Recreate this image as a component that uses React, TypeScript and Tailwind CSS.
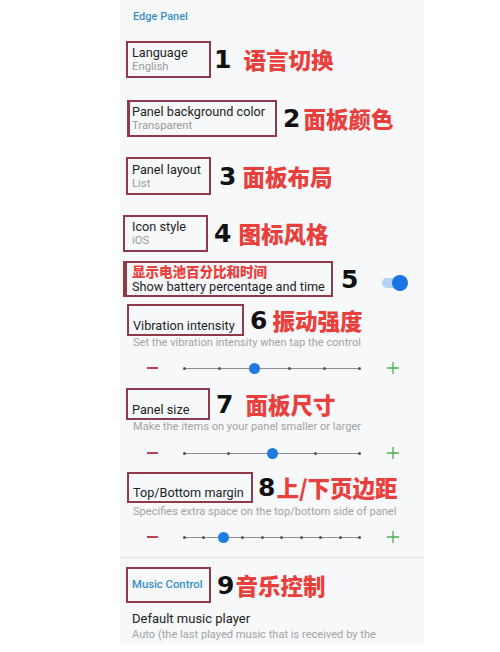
import React from "react";

const cjk = { fontFamily: '"Noto Sans CJK SC", "Noto Sans", sans-serif' };
const digit = { fontFamily: '"DejaVu Sans", sans-serif' };

function Note({ num, text, numMl, textMl }: { num: string; text: string; numMl: string; textMl: string }) {
  return (
    <>
      <span className={`${numMl} text-[25px] font-bold leading-none text-[#111]`} style={digit}>
        {num}
      </span>
      <span className={`${textMl} text-[22.5px] font-black leading-none text-[#e8413d]`} style={cjk}>
        {text}
      </span>
    </>
  );
}

function Slider({ stops, value }: { stops: number; value: number }) {
  return (
    <div className="flex h-[20px] items-center">
      <div className="ml-[27px] h-[2px] w-[11px] bg-[#b4435a]" />
      <div className="relative ml-[25px] flex h-[12px] w-[178px] items-center justify-between">
        <div className="absolute left-0 right-0 top-[6px] h-px bg-[#8d8d8d]" />
        {Array.from({ length: stops }).map((_, i) =>
          i === value ? (
            <div key={i} className="relative -mx-[4px] h-[11px] w-[11px] rounded-full bg-[#1f7be0]" />
          ) : (
            <div key={i} className="relative h-[3px] w-[3px] rounded-full bg-[#555]" />
          )
        )}
      </div>
      <svg className="ml-[26px]" width="12" height="12" viewBox="0 0 12 12">
        <path d="M0 6H12M6 0V12" stroke="#4cae50" strokeWidth="1.3" />
      </svg>
    </div>
  );
}

export default function App() {
  return (
    <div className="h-[652px] w-[500px] bg-white" style={{ fontFamily: "Roboto, sans-serif" }}>
      <div className="ml-[120px] flex h-[644px] w-[304px] flex-col overflow-hidden bg-[#f7f8fa]">
        <div className="ml-[13px] mt-[10px] text-[11px] font-medium leading-[14px] text-[#3b8fc6]">Edge Panel</div>

        {/* 1 */}
        <div className="mt-[17px] flex h-[37px] items-center">
          <div className="ml-[6px] flex h-[37px] w-[85px] flex-col justify-center border-2 border-[#8e3a48] pl-[4px]">
            <div className="text-[12.7px] leading-[15px] text-[#222]">Language</div>
            <div className="text-[11.3px] leading-[14px] text-[#9a9a9a]">English</div>
          </div>
          <Note num="1" text="语言切换" numMl="ml-[3px]" textMl="ml-[12px]" />
        </div>

        {/* 2 */}
        <div className="mt-[22px] flex h-[37px] items-center">
          <div className="ml-[7px] flex h-[37px] w-[150px] flex-col justify-center border-2 border-l-[3px] border-[#8e3a48] pl-[2px]">
            <div className="whitespace-nowrap text-[12.7px] leading-[15px] text-[#222]">Panel background color</div>
            <div className="text-[11.3px] leading-[14px] text-[#9a9a9a]">Transparent</div>
          </div>
          <Note num="2" text="面板颜色" numMl="ml-[6px]" textMl="ml-[3px]" />
        </div>

        {/* 3 */}
        <div className="mt-[20px] flex h-[38px] items-center">
          <div className="ml-[6px] flex h-[38px] w-[85px] flex-col justify-center border-2 border-[#8e3a48] pl-[4px]">
            <div className="text-[12.7px] leading-[15px] text-[#222]">Panel layout</div>
            <div className="text-[11.3px] leading-[14px] text-[#9a9a9a]">List</div>
          </div>
          <Note num="3" text="面板布局" numMl="ml-[8px]" textMl="ml-[6px]" />
        </div>

        {/* 4 */}
        <div className="mt-[20px] flex h-[37px] items-center">
          <div className="ml-[3px] flex h-[37px] w-[85px] flex-col justify-center border-2 border-[#8e3a48] pl-[7px]">
            <div className="text-[12.7px] leading-[15px] text-[#222]">Icon style</div>
            <div className="text-[11.3px] leading-[14px] text-[#9a9a9a]">iOS</div>
          </div>
          <Note num="4" text="图标风格" numMl="ml-[6px]" textMl="ml-[7px]" />
        </div>

        {/* 5 */}
        <div className="mt-[9px] flex h-[36px] items-center">
          <div className="ml-[3px] flex h-[36px] w-[210px] flex-col justify-center border-2 border-l-[4px] border-[#8e3a48] pl-[5px]">
            <div className="text-[13.5px] font-black leading-[14px] text-[#e8413d]" style={cjk}>
              显示电池百分比和时间
            </div>
            <div className="mt-[2px] whitespace-nowrap text-[12.7px] leading-[14px] text-[#222]">Show battery percentage and time</div>
          </div>
          <span className="ml-[8px] text-[25px] font-bold leading-none text-[#111]" style={digit}>
            5
          </span>
          <div className="relative ml-auto mr-[16px] mt-[8px] flex h-[16px] w-[26px] items-center">
            <div className="h-[10px] w-[22px] rounded-full bg-[#b3d3f2]" />
            <div className="absolute right-0 top-0 h-[16px] w-[16px] rounded-full bg-[#1b74e4]" />
          </div>
        </div>

        {/* 6 */}
        <div className="mt-[7px] flex h-[32px] items-center">
          <div className="ml-[7px] flex h-[32px] w-[117px] flex-col justify-end border-2 border-[#8e3a48] pb-[1px] pl-[4px]">
            <div className="whitespace-nowrap text-[12.7px] leading-[15px] text-[#222]">Vibration intensity</div>
          </div>
          <Note num="6" text="振动强度" numMl="ml-[6px]" textMl="ml-[5px]" />
        </div>
        <div className="ml-[13px] text-[11.1px] leading-[13px] text-[#a3a3a3]">Set the vibration intensity when tap the control</div>
        <div className="mt-[9px]">
          <Slider stops={6} value={2} />
        </div>

        {/* 7 */}
        <div className="mt-[10px] flex h-[32px] items-center">
          <div className="ml-[6px] flex h-[32px] w-[84px] flex-col justify-end border-2 border-[#8e3a48] pb-[1px] pl-[4px]">
            <div className="text-[12.7px] leading-[15px] text-[#222]">Panel size</div>
          </div>
          <Note num="7" text="面板尺寸" numMl="ml-[6px]" textMl="ml-[12px]" />
        </div>
        <div className="ml-[13px] text-[11.1px] leading-[13px] text-[#a3a3a3]">Make the items on your panel smaller or larger</div>
        <div className="mt-[10px]">
          <Slider stops={5} value={2} />
        </div>

        {/* 8 */}
        <div className="mt-[9px] flex h-[31px] items-center">
          <div className="ml-[7px] flex h-[31px] w-[126px] flex-col justify-end border-2 border-[#8e3a48] pb-[1px] pl-[4px]">
            <div className="whitespace-nowrap text-[12.7px] leading-[15px] text-[#222]">Top/Bottom margin</div>
          </div>
          <Note num="8" text="上/下页边距" numMl="ml-[5px]" textMl="ml-[1px]" />
        </div>
        <div className="ml-[13px] mt-[2px] whitespace-nowrap text-[11.1px] leading-[13px] text-[#a3a3a3]">
          Specifies extra space on the top/bottom side of panel
        </div>
        <div className="mt-[9px]">
          <Slider stops={10} value={2} />
        </div>

        <div className="mt-[10px] h-px bg-[#e3e3e3]" />

        {/* 9 */}
        <div className="mt-[9px] flex h-[36px] items-center">
          <div className="ml-[6px] flex h-[36px] w-[85px] flex-col justify-center border-2 border-[#8e3a48] pl-[4px]">
            <div className="text-[11.3px] font-medium leading-[14px] text-[#3b8fc6]">Music Control</div>
          </div>
          <Note num="9" text="音乐控制" numMl="ml-[6px]" textMl="ml-[1px]" />
        </div>

        <div className="ml-[12px] mt-[8px] text-[13px] leading-[16px] text-[#222]">Default music player</div>
        <div className="ml-[12px] mt-[1px] whitespace-nowrap text-[11.1px] leading-[14px] text-[#a3a3a3]">
          Auto (the last played music that is received by the
        </div>
      </div>
    </div>
  );
}
